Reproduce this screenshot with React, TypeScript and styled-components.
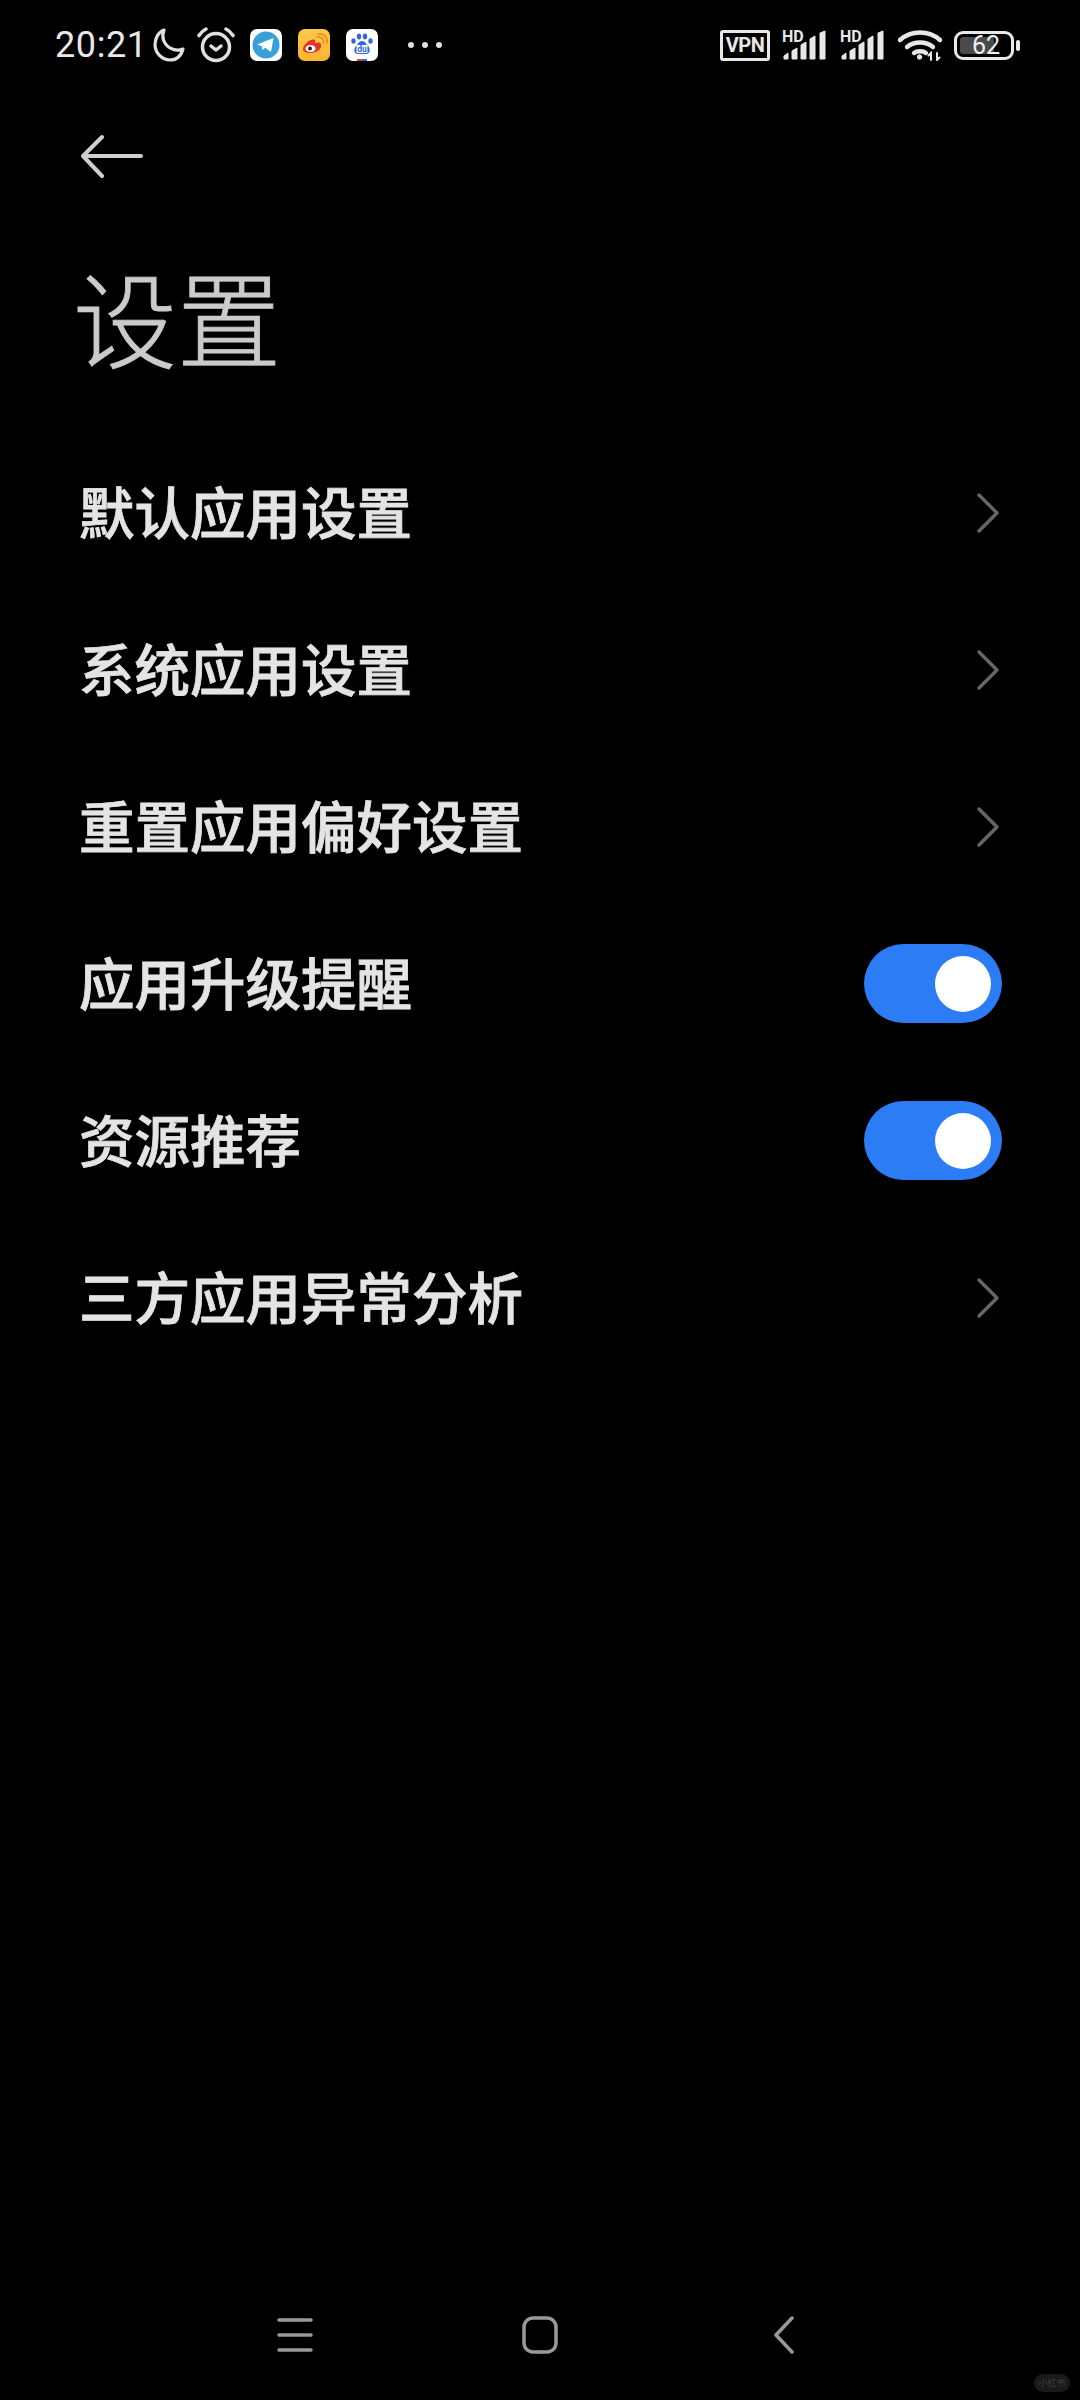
import React from 'react';
import styled, { createGlobalStyle } from 'styled-components';

const GlobalStyle = createGlobalStyle`
    html, body {
        margin: 0;
        padding: 0;
        background: #000;
    }
    * {
        box-sizing: border-box;
    }
`

const Page = styled.div`
    position: relative;
    width: 1080px;
    height: 2400px;
    display: flex;
    flex-direction: column;
    background: #000;
    overflow: hidden;
    font-family: "Noto Sans CJK SC", "Noto Sans", sans-serif;
`

const StatusBar = styled.div`
    height: 90px;
    padding: 0 66px 0 55px;
    display: flex;
    align-items: center;
    justify-content: space-between;
    color: #e8e8e8;
`

const StatusGroup = styled.div<{ $gap: number }>`
    display: flex;
    align-items: center;
    gap: ${(p) => p.$gap}px;
`

const Clock = styled.span`
    font-family: Roboto, sans-serif;
    font-size: 36px;
    letter-spacing: 0.6px;
    line-height: 1;
    width: 86px;
`

const TileGroup = styled.div`
    margin-left: 3px;
    display: flex;
    align-items: center;
    gap: 16px;
`

const AppTile = styled.svg`
    display: block;
    width: 32px;
    height: 32px;
`

const Dots = styled.svg`
    display: block;
    margin-left: 17px;
`

const SignalIcon = styled.svg`
    display: block;
    overflow: visible;
`

const VpnBadge = styled.span`
    width: 50px;
    height: 31px;
    border: 3px solid #e8e8e8;
    border-radius: 3px;
    display: flex;
    align-items: center;
    justify-content: center;
    font-family: Roboto, sans-serif;
    font-size: 20px;
    font-weight: 700;
    letter-spacing: -0.5px;
`

const Battery = styled.div`
    position: relative;
    width: 60px;
    height: 29px;
    border: 3px solid #e8e8e8;
    border-radius: 9px;
    padding: 3px;
    display: flex;
    &::after {
        content: "";
        position: absolute;
        right: -9px;
        top: 6px;
        width: 4px;
        height: 11px;
        border-radius: 2px;
        background: #e8e8e8;
    }
`

const BatteryFill = styled.div`
    height: 100%;
    background: #4a4a4a;
    border-radius: 3px;
`

const BatteryLevel = styled.span`
    position: absolute;
    left: 15px;
    top: -3px;
    font-family: Roboto, sans-serif;
    font-size: 25px;
    line-height: 29px;
    color: #eee;
`

const BackRow = styled.div`
    height: 130px;
    padding: 4px 0 0 81px;
    display: flex;
    align-items: center;
`

const Title = styled.h1`
    height: 214px;
    margin: 0;
    padding: 0 0 0 73px;
    font-size: 104px;
    font-weight: 300;
    -webkit-text-stroke: 0.8px #cbcbcb;
    line-height: 192px;
    color: #cbcbcb;
`

const List = styled.div`
    display: flex;
    flex-direction: column;
`

const Row = styled.div`
    height: 157px;
    padding: 0 78px 0 79px;
    display: flex;
    align-items: center;
    justify-content: space-between;
`

const RowLabel = styled.span`
    margin-bottom: 3px;
    font-size: 55.5px;
    font-weight: 500;
    -webkit-text-stroke: 0.8px #e4e4e4;
    color: #e4e4e4;
    line-height: 1;
`

const Toggle = styled.div`
    width: 138px;
    height: 79px;
    border-radius: 40px;
    background: #2c7cf6;
    padding-right: 11px;
    display: flex;
    align-items: center;
    justify-content: flex-end;
`

const Knob = styled.div`
    width: 56px;
    height: 56px;
    border-radius: 50%;
    background: #fff;
`

const Chevron = styled.svg`
    display: block;
    width: 24px;
    height: 44px;
    margin-right: 2px;
`

const NavBar = styled.div`
    position: absolute;
    left: 0;
    right: 0;
    bottom: 46px;
    padding-left: 277px;
    display: flex;
    align-items: center;
`

const NavIcon = styled.svg<{ $after: number }>`
    display: block;
    margin-right: ${(p) => p.$after}px;
`

const Watermark = styled.div`
    position: absolute;
    right: 10px;
    bottom: 8px;
    width: 36px;
    height: 18px;
    border-radius: 9px;
    background: #1a1a1a;
    color: #3c3c3c;
    font-size: 9px;
    line-height: 18px;
    text-align: center;
`

type Item = { label: string; toggle?: boolean }

const items: Item[] = [
    { label: '默认应用设置' },
    { label: '系统应用设置' },
    { label: '重置应用偏好设置' },
    { label: '应用升级提醒', toggle: true },
    { label: '资源推荐', toggle: true },
    { label: '三方应用异常分析' },
]

const Signal = () => (
    <SignalIcon width="46" height="32" viewBox="0 0 46 32">
        <text x="0" y="13" fontFamily="Roboto, sans-serif" fontWeight="700" fontSize="16" fill="#e8e8e8">HD</text>
        <path d="M2 30v-3l4-3v6z M10 30v-8l5-3v11z M19 30v-14l5-3v17z M28 30v-20l5-3v23z M38 30v-26l5-2v28z" fill="#e8e8e8" stroke="#e8e8e8" strokeWidth="1" strokeLinejoin="round" />
    </SignalIcon>
)

const Wifi = () => (
    <svg width="44" height="32" viewBox="0 0 44 32" fill="none" stroke="#e8e8e8" strokeWidth="4.400" strokeLinecap="round">
        <path d="M2 11C13 1 31 1 42 11" />
        <path d="M9 18C16 12 28 12 35 18" />
        <path d="M16 24c3-2.400 9-2.400 12 0" />
        <circle cx="21.500" cy="28" r="2.200" fill="#e8e8e8" strokeWidth="1" />
        <path d="M33 31v-7l-2.500 2.500M39 24v7l2.500-2.500" strokeWidth="2" />
    </svg>
)

const MoonIcon = () => (
    <svg width="32" height="34" viewBox="0 0 32 34" fill="none">
        <path d="M11 2C5.500 4 2 10 2 16.500 2 25 9 32 17 32c6 0 11-4 13-11-9 3.500-17-2-19.500-9-1-3-.8-7 .5-10z" stroke="#e0e0e0" strokeWidth="3.200" strokeLinejoin="round" />
    </svg>
)

const AlarmIcon = () => (
    <svg width="38" height="36" viewBox="0 0 38 36" fill="none" stroke="#e0e0e0" strokeWidth="3.500" strokeLinecap="round" strokeLinejoin="round">
        <circle cx="19" cy="20" r="13.500" />
        <path d="M2 8.500C4 5.500 6 3.500 9 2M36 8.500C34 5.500 32 3.500 29 2" />
        <path d="M14 19l5 4 5-4" />
    </svg>
)

const TelegramTile = () => (
    <AppTile viewBox="0 0 32 32">
        <rect width="32" height="32" rx="7" fill="#fff" />
        <circle cx="16" cy="16" r="13.500" fill="#37a0d8" />
        <path d="M7 15.500L23.500 9l-2.500 14-6-4.200-2.500 2.500-.6-4z" fill="#fff" />
    </AppTile>
)

const WeiboTile = () => (
    <AppTile viewBox="0 0 32 32">
        <defs>
            <linearGradient id="weibo" x1="0" y1="0" x2="0" y2="1">
                <stop offset="0" stopColor="#fdc94a" />
                <stop offset="1" stopColor="#fbb52f" />
            </linearGradient>
        </defs>
        <rect width="32" height="32" rx="7" fill="url(#weibo)" />
        <path d="M5 20c0-4 6-9.500 10-9.500 2.500 0 2.500 2 2 3.500 3-1 6-1 6 1.500C24 20 19 24 12.500 24 8 24 5 22.500 5 20z" fill="#e6322c" />
        <ellipse cx="12.500" cy="19.500" rx="5" ry="3.600" fill="#fff" />
        <circle cx="12" cy="19.500" r="2" fill="#222" />
        <path d="M19 8c4-.8 7 2 6.500 6M20 5c6-1 10 3.500 9 9" fill="none" stroke="#f08a1d" strokeWidth="1.600" strokeLinecap="round" />
    </AppTile>
)

const BaiduTile = () => (
    <AppTile viewBox="0 0 32 32">
        <rect width="32" height="32" rx="7" fill="#fff" />
        <g fill="#3366dd">
            <ellipse cx="7.500" cy="12" rx="2.200" ry="2.800" />
            <ellipse cx="13" cy="7.500" rx="2.200" ry="3" />
            <ellipse cx="19" cy="7.500" rx="2.200" ry="3" />
            <ellipse cx="24.500" cy="12" rx="2.200" ry="2.800" />
            <path d="M16 12c3 0 4 3 6 5 2.500 2.500 2.500 8-2 8h-8c-4.500 0-4.500-5.500-2-8 2-2 3-5 6-5z" />
        </g>
        <rect x="10.500" y="16" width="11" height="8" rx="1" fill="#fff" />
        <text x="16" y="23" textAnchor="middle" fontFamily="Roboto, sans-serif" fontWeight="700" fontSize="8.500" fill="#3366dd">du</text>
        <rect x="11" y="30" width="5" height="2" fill="#d9433b" />
        <rect x="16" y="30" width="5" height="2" fill="#3366dd" />
    </AppTile>
)

export default function App() {
    return (
        <Page>
            <GlobalStyle />
            <StatusBar>
                <StatusGroup $gap={12}>
                    <Clock>20:21</Clock>
                    <MoonIcon />
                    <AlarmIcon />
                    <TileGroup>
                        <TelegramTile />
                        <WeiboTile />
                        <BaiduTile />
                    </TileGroup>
                    <Dots width="36" height="8" viewBox="0 0 36 8" fill="#e0e0e0">
                        <circle cx="4" cy="4" r="3" />
                        <circle cx="18" cy="4" r="3" />
                        <circle cx="32" cy="4" r="3" />
                    </Dots>
                </StatusGroup>
                <StatusGroup $gap={12}>
                    <VpnBadge>VPN</VpnBadge>
                    <Signal />
                    <Signal />
                    <Wifi />
                    <Battery>
                        <BatteryFill style={{ width: '70%' }} />
                        <BatteryLevel>62</BatteryLevel>
                    </Battery>
                </StatusGroup>
            </StatusBar>
            <BackRow>
                <svg width="62" height="46" viewBox="0 0 62 46" fill="none" stroke="#cfcfcf" strokeWidth="4" strokeLinecap="round" strokeLinejoin="round">
                    <path d="M21 3L2 22l19 20M3 22h57" />
                </svg>
            </BackRow>
            <Title>设置</Title>
            <List>
                {items.map((item) => (
                    <Row key={item.label}>
                        <RowLabel>{item.label}</RowLabel>
                        {item.toggle ? (
                            <Toggle><Knob /></Toggle>
                        ) : (
                            <Chevron viewBox="0 0 24 44" fill="none" stroke="#666" strokeWidth="3.500" strokeLinecap="round" strokeLinejoin="round">
                                <path d="M3 4l18 18L3 40" />
                            </Chevron>
                        )}
                    </Row>
                ))}
            </List>
            <NavBar>
                <NavIcon $after={209} width="36" height="34" viewBox="0 0 36 34" fill="none" stroke="#999" strokeWidth="3.500" strokeLinecap="round">
                    <path d="M2 2h32M2 17h32M2 32h32" />
                </NavIcon>
                <NavIcon $after={216} width="36" height="38" viewBox="0 0 36 38" fill="none" stroke="#999" strokeWidth="3.500">
                    <rect x="2" y="2" width="32" height="34" rx="9" />
                </NavIcon>
                <NavIcon $after={0} width="20" height="38" viewBox="0 0 20 38" fill="none" stroke="#999" strokeWidth="3.500" strokeLinecap="round" strokeLinejoin="round">
                    <path d="M18 2L2 19l16 17" />
                </NavIcon>
            </NavBar>
            <Watermark>小红书</Watermark>
        </Page>
    )
}
